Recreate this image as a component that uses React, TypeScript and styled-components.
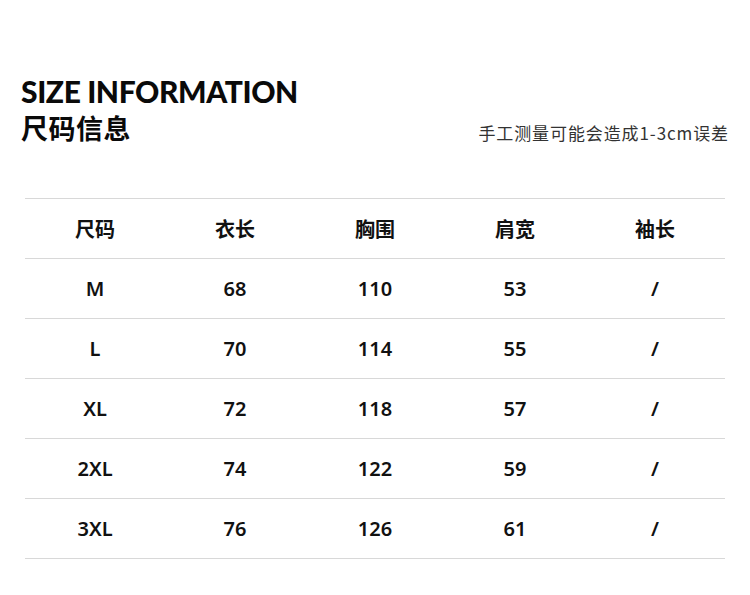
import styled, { createGlobalStyle } from 'styled-components';

const Global = createGlobalStyle`
  html, body {
    margin: 0;
    padding: 0;
    background: #ffffff;
  }
  body {
    font-family: "Noto Sans", "Noto Sans CJK SC", sans-serif;
    color: #111;
  }
`;

const Page = styled.div`
  width: 750px;
  height: 595px;
  box-sizing: border-box;
  padding: 74px 21px 0 21px;
  background: #fff;
`;

const Header = styled.div`
  display: flex;
  justify-content: space-between;
  align-items: flex-end;
  margin-bottom: 52px;
`;

const Titles = styled.div`
  display: flex;
  flex-direction: column;
`;

const EnTitle = styled.h1`
  margin: 0;
  font-family: "Lato", "Noto Sans", sans-serif;
  font-weight: 900;
  font-size: 30px;
  line-height: 34px;
  letter-spacing: -0.4px;
  color: #0a0a0a;
`;

const CnTitle = styled.h2`
  margin: 2px 0 0 0;
  font-family: "Noto Sans CJK SC", sans-serif;
  font-weight: 700;
  font-size: 27px;
  line-height: 36px;
  letter-spacing: 0.5px;
  color: #0a0a0a;
`;

const Note = styled.div`
  font-family: "Noto Sans CJK SC", sans-serif;
  font-size: 17px;
  line-height: 20px;
  letter-spacing: 0.9px;
  color: #333;
  margin-bottom: 3px;
`;

const Table = styled.div`
  margin: 0 4px;
  border-top: 1px solid #d8d8d8;
`;

const Row = styled.div`
  display: grid;
  grid-template-columns: repeat(5, 1fr);
  height: 59px;
  border-bottom: 1px solid #d8d8d8;
  align-items: center;
`;

const Cell = styled.div<{ $head?: boolean }>`
  text-align: center;
  font-family: ${p => (p.$head ? '"Noto Sans CJK SC"' : '"Noto Sans"')}, sans-serif;
  font-weight: ${p => (p.$head ? 700 : 600)};
  font-size: 20px;
  color: #111;
`;

const head = ['尺码', '衣长', '胸围', '肩宽', '袖长'];
const rows = [
  ['M', '68', '110', '53', '/'],
  ['L', '70', '114', '55', '/'],
  ['XL', '72', '118', '57', '/'],
  ['2XL', '74', '122', '59', '/'],
  ['3XL', '76', '126', '61', '/'],
];

export default function App() {
  return (
    <Page>
      <Global />
      <Header>
        <Titles>
          <EnTitle>SIZE INFORMATION</EnTitle>
          <CnTitle>尺码信息</CnTitle>
        </Titles>
        <Note>手工测量可能会造成1-3cm误差</Note>
      </Header>
      <Table>
        <Row>
          {head.map(h => (
            <Cell $head key={h}>{h}</Cell>
          ))}
        </Row>
        {rows.map(r => (
          <Row key={r[0]}>
            {r.map((c, i) => (
              <Cell key={i}>{c}</Cell>
            ))}
          </Row>
        ))}
      </Table>
    </Page>
  );
}
